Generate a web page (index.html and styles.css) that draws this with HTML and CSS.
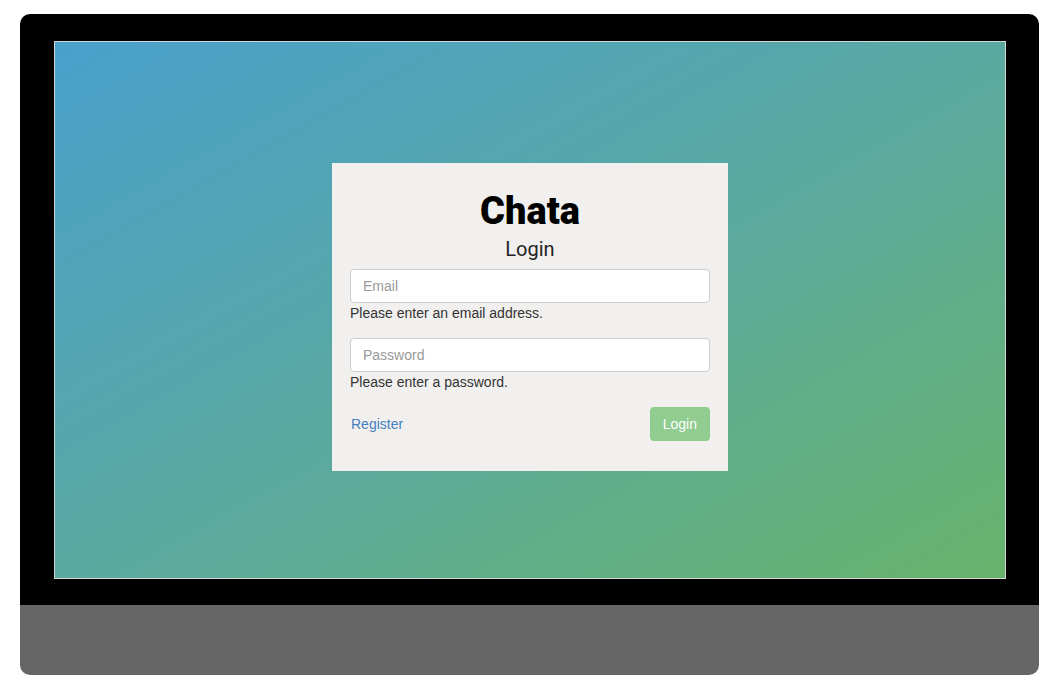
FILE: index.html
```html
<!DOCTYPE html>
<html>
<head>
<meta charset="utf-8">
<title>Chata</title>
<link rel="stylesheet" href="styles.css">
</head>
<body>
<div class="page">
  <div class="device">
    <div class="bezel">
      <div class="screen">
        <div class="card">
          <h1 class="brand">Chata</h1>
          <h2 class="subtitle">Login</h2>
          <form class="form">
            <div class="field">
              <input class="input" type="email" placeholder="Email">
              <div class="help">Please enter an email address.</div>
            </div>
            <div class="field">
              <input class="input" type="password" placeholder="Password">
              <div class="help">Please enter a password.</div>
            </div>
            <div class="actions">
              <a class="link" href="#">Register</a>
              <button class="btn" type="button" disabled>Login</button>
            </div>
          </form>
        </div>
      </div>
    </div>
    <div class="stand"></div>
  </div>
</div>
</body>
</html>
```
FILE: styles.css
```css
html, body {
  margin: 0;
  padding: 0;
  background: #ffffff;
}
.page {
  padding: 14px 20px 20px 20px;
}
.device {
  width: 1019px;
  border-radius: 10px;
  overflow: hidden;
}
.bezel {
  background: #000000;
  height: 591px;
  padding: 27px 33px 0 34px;
  box-sizing: border-box;
}
.screen {
  height: 538px;
  box-sizing: border-box;
  border: 1px solid #d6d6d6;
  background: linear-gradient(to bottom right, #49a0cb 0%, #58a8a6 45%, #69b36c 100%);
  display: flex;
  justify-content: center;
  align-items: flex-start;
  padding-top: 121px;
}
.stand {
  height: 70px;
  background: #666666;
}
.card {
  width: 396px;
  height: 308px;
  box-sizing: border-box;
  background: #f1f0ee;
  padding: 27px 18px 0 18px;
  text-align: center;
}
.brand {
  margin: 0;
  font-family: Roboto, "Liberation Sans", sans-serif;
  font-weight: 900;
  font-size: 38px;
  line-height: 42px;
  color: #000000;
}
.subtitle {
  margin: 5px 0 0 0;
  font-family: Roboto, "Liberation Sans", sans-serif;
  font-weight: 400;
  font-size: 20px;
  line-height: 24px;
  color: #222222;
}
.form {
  margin-top: 8px;
  text-align: left;
  font-family: "Liberation Sans", Arial, sans-serif;
  font-size: 14px;
}
.field {
  margin-bottom: 15px;
}
.input {
  display: block;
  width: 360px;
  height: 34px;
  box-sizing: border-box;
  margin: 0;
  padding: 6px 12px;
  border: 1px solid #cccccc;
  border-radius: 4px;
  background: #ffffff;
  font-family: "Liberation Sans", Arial, sans-serif;
  font-size: 14px;
  color: #555555;
  outline: none;
}
.input::placeholder {
  color: #999999;
}
.help {
  margin-top: 0;
  line-height: 20px;
  color: #333333;
}
.actions {
  display: flex;
  justify-content: space-between;
  align-items: center;
}
.link {
  margin-left: 1px;
  color: #4580c0;
  text-decoration: none;
  line-height: 20px;
}
.btn {
  height: 34px;
  padding: 0 12px;
  border: 1px solid #8cc98c;
  border-radius: 4px;
  background: #91cc91;
  color: #ffffff;
  font-family: "Liberation Sans", Arial, sans-serif;
  font-size: 14px;
  line-height: 20px;
  margin: 0;
}
```
